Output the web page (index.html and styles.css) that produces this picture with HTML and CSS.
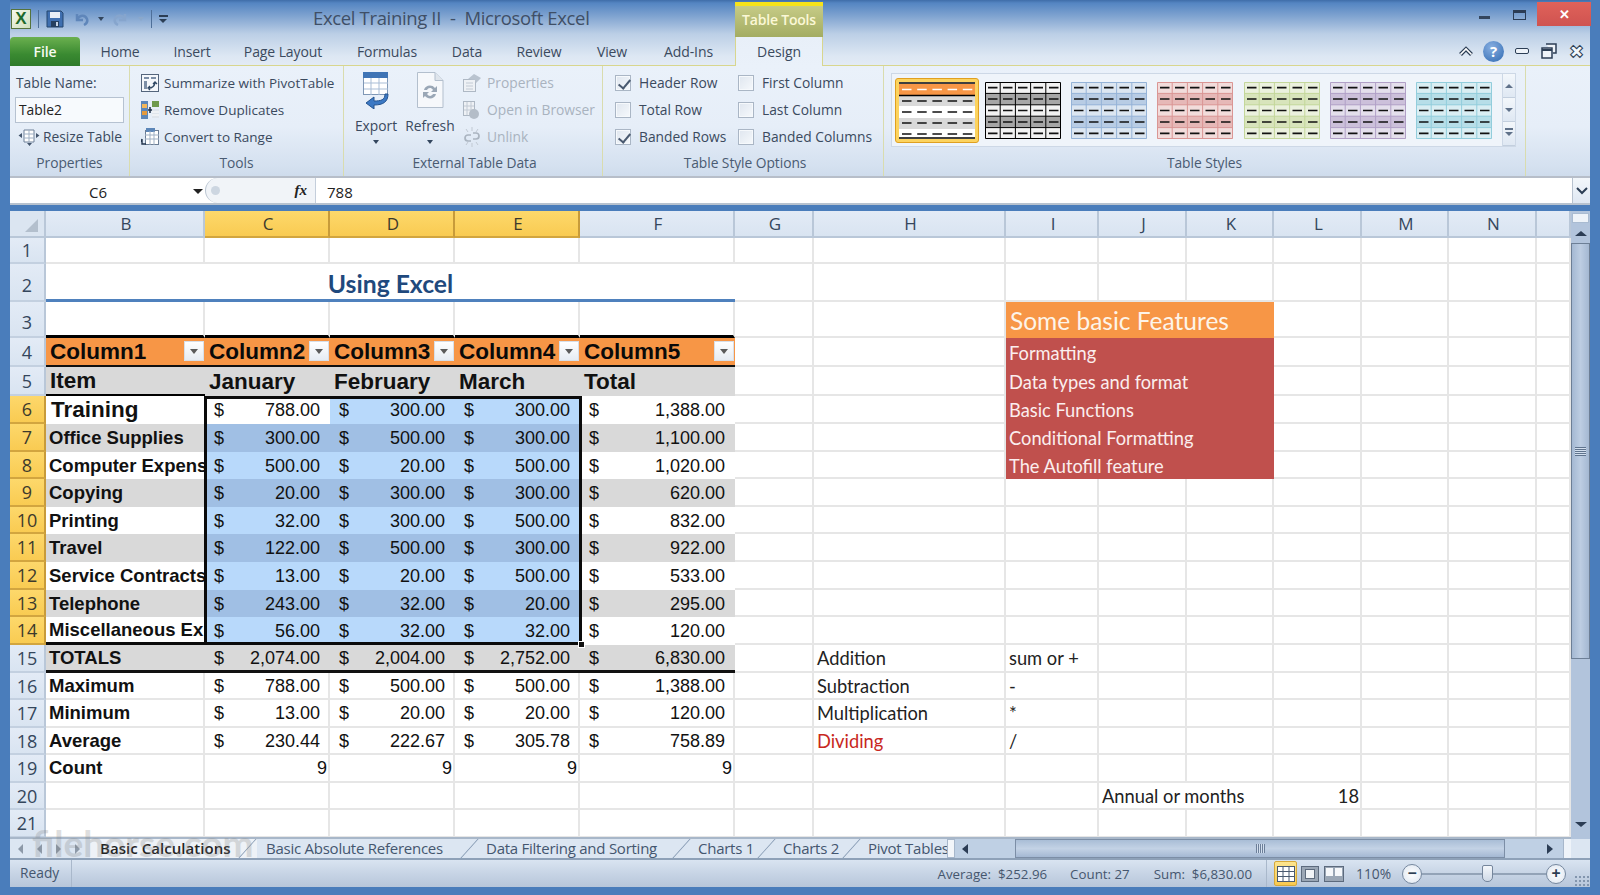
FILE: index.html
```html
<!DOCTYPE html>
<html lang="en">
<head>
    <meta charset="UTF-8">
    <title>Excel Training II - Microsoft Excel</title>
    <link rel="stylesheet" href="styles.css">
</head>
<body>
    <svg class="defs" width="0" height="0">
        <symbol id="grid" viewBox="0 0 76 57">
            <rect width="76" height="57" class="sw-light"/>
            <rect y="11.4" width="76" height="11.4" class="sw-dark"/>
            <rect y="34.2" width="76" height="11.4" class="sw-dark"/>
            <path class="sw-line" d="M.5.5H75.5V56.5H.5ZM15.2 0V57M30.4 0V57M45.6 0V57M60.8 0V57M0 11.4H76M0 22.8H76M0 34.2H76M0 45.6H76"/>
            <path class="sw-dash" d="M3 5.7h9.5M18 5.7h9.5M33 5.7h9.5M48.500 5.7h9.5M64 5.7h9.5M3 17h9.5M18 17h9.5M33 17h9.5M48.500 17h9.5M64 17h9.5M3 28.500h9.5M18 28.500h9.5M33 28.500h9.5M48.500 28.500h9.5M64 28.500h9.5M3 40h9.5M18 40h9.5M33 40h9.5M48.500 40h9.5M64 40h9.5M3 51.300h9.5M18 51.300h9.5M33 51.300h9.5M48.500 51.300h9.500M64 51.300h9.500"/>
        </symbol>
    </svg>

    <header class="chrome">
        <div class="titlebar">
            <div class="qat">
                <span class="xl-logo">X</span>
                <span class="qat-sep"></span>
                <svg class="qat-icon" width="18" height="18" viewBox="0 0 18 18"><path d="M1 1h14l2 2v14H1z" fill="#3f6fb0" stroke="#24466f"/><rect x="4" y="2" width="10" height="6" fill="#e8eef6"/><rect x="5" y="11" width="8" height="6" fill="#27405f"/><rect x="10" y="12" width="2" height="4" fill="#c7d5e6"/></svg>
                <svg class="qat-icon undo" width="16" height="16" viewBox="0 0 16 16"><path d="M4 3v6h6M4 9c2-5 8-6 10-1 1 3-1 5-3 6" fill="none" stroke="#5f86ba" stroke-width="2.500"/></svg>
                <span class="drop"></span>
                <svg class="qat-icon redo" width="16" height="16" viewBox="0 0 16 16"><path d="M12 3v6H6M12 9c-2-5-8-6-10-1-1 3 1 5 3 6" fill="none" stroke="#86a5cd" stroke-width="2.500"/></svg>
                <span class="drop faint"></span>
                <span class="qat-sep"></span>
                <span class="customize"></span>
            </div>
            <div class="doc-title">Excel Training II&nbsp; -&nbsp; Microsoft Excel</div>
            <div class="context-tab">Table Tools</div>
            <div class="winctl">
                <span class="w-min"></span>
                <span class="w-max"></span>
                <span class="w-close">✕</span>
            </div>
        </div>
        <nav class="tabs">
            <span class="tab file">File</span>
            <span class="tab t-home">Home</span>
            <span class="tab t-insert">Insert</span>
            <span class="tab t-layout">Page Layout</span>
            <span class="tab t-formulas">Formulas</span>
            <span class="tab t-data">Data</span>
            <span class="tab t-review">Review</span>
            <span class="tab t-view">View</span>
            <span class="tab t-addins">Add-Ins</span>
            <span class="tab design">Design</span>
            <div class="tab-tools">
                <svg width="16" height="12" viewBox="0 0 16 12"><path d="M2.500 9.500L8 4l5.500 5.500" fill="none" stroke="#2c3e55" stroke-width="4"/><path d="M2.500 9.500L8 4l5.500 5.500" fill="none" stroke="#fff" stroke-width="1.600"/></svg>
                <span class="help">?</span>
                <span class="mini-min"></span>
                <svg width="18" height="18" viewBox="0 0 18 18"><path d="M6 2h10v9h-3M2 6h10v10H2z" fill="#eef3f9" stroke="#2c3e55" stroke-width="1.500"/><path d="M2 8h10" stroke="#2c3e55" stroke-width="2"/></svg>
                <span class="mini-x">✖</span>
            </div>
        </nav>
    </header>

    <section class="ribbon">
        <div class="group g-props">
            <div class="group-body">
                <div class="rrow">Table Name:</div>
                <div class="rrow"><div class="name-input">Table2</div></div>
                <div class="rrow">
                    <svg width="24" height="20" viewBox="0 0 24 20"><path d="M7 3h10v12H7z" fill="#fff" stroke="#6f8098"/><path d="M7 7h10M7 11h10M12 3v12" stroke="#9fb0c4"/><path d="M5 6v5L1.500 8.500zM19 6v5l3.500-2.500zM10 16h5l-2.500 3z" fill="#44566e"/></svg>
                    Resize Table
                </div>
            </div>
            <div class="group-label">Properties</div>
        </div>
        <div class="group g-tools">
            <div class="group-body">
                <div class="rrow">
                    <svg width="18" height="18" viewBox="0 0 18 18"><rect x=".5" y=".5" width="17" height="17" fill="#f4f7fb" stroke="#54657c"/><path d="M3 3h5v2H3zM10 3h5v2h-5zM3 7h3v8H3z" fill="#7c8ea6"/><path d="M8 14c3 0 5-1 6-5m-2 1l2-2 2 2M9 12l-2 2 2 2" fill="none" stroke="#2f4763" stroke-width="1.300"/></svg>
                    Summarize with PivotTable
                </div>
                <div class="rrow">
                    <svg width="18" height="20" viewBox="0 0 18 20"><rect x="0" y="1" width="7" height="18" fill="#5c86b8"/><rect x="1" y="4" width="5" height="4" fill="#f3b75a"/><rect x="1" y="11" width="5" height="4" fill="#e59a3d"/><rect x="11" y="1" width="7" height="6" fill="#6f9a4d"/><rect x="11" y="9" width="7" height="9" fill="#dfe5ec"/><path d="M11 12h7M11 15h7" stroke="#fff"/><path d="M7 10h4M9 7v6" stroke="#1f2f44" stroke-width="1.500"/></svg>
                    Remove Duplicates
                </div>
                <div class="rrow">
                    <svg width="18" height="20" viewBox="0 0 18 20"><rect x="4.500" y="3.500" width="13" height="14" fill="#fff" stroke="#6b7d94"/><rect x="5" y="1" width="9" height="4" fill="#5c86b8"/><path d="M4 8h14M4 12h14M9 4v14M13 4v14" stroke="#9fb0c4"/><path d="M1 12v5h4M0 15l1-3" fill="none" stroke="#22344c" stroke-width="1.400"/></svg>
                    Convert to Range
                </div>
            </div>
            <div class="group-label">Tools</div>
        </div>
        <div class="group g-external">
            <div class="group-body">
                <div class="big-btn">
                    <svg width="30" height="38" viewBox="0 0 30 38"><rect x="2.500" y="1.500" width="24" height="22" fill="#fff" stroke="#7f97b5"/><rect x="2" y="1" width="25" height="6" fill="#3f74b5"/><path d="M3 12h24M3 18h24M10 7v17M18 7v17" stroke="#a9bdd6"/><path d="M24 23c0 6-4 7-11 7v-4l-8 6 8 6v-4c9 0 14-3 14-11z" fill="#3c79c4" stroke="#24548f"/></svg>
                    <span>Export</span>
                    <span class="drop"></span>
                </div>
                <div class="big-btn">
                    <svg width="30" height="38" viewBox="0 0 30 38"><path d="M2.500 1.500H20l8 8v27H2.500z" fill="#f6f8fb" stroke="#b3bfcd"/><path d="M20 1.500v8h8" fill="#dfe5ec" stroke="#b3bfcd"/><path d="M9 19c1-5 8-6 11-2l2-2v6h-6l2-2c-2-3-5-2-6 0zM21 23c-1 5-8 6-11 2l-2 2v-6h6l-2 2c2 3 5 2 6 0z" fill="#9aa7b6"/></svg>
                    <span>Refresh</span>
                    <span class="drop"></span>
                </div>
                <div class="small-list disabled">
                    <div class="rrow">
                        <svg width="20" height="20" viewBox="0 0 20 20"><rect x="1.500" y="6.500" width="12" height="12" fill="#eef1f5" stroke="#aeb8c4"/><path d="M4 10h7M4 13h7M4 16h7" stroke="#c2cad4"/><path d="M6 6l6-5 7 4-5 5-1-3z" fill="#b9c3cf"/></svg>
                        Properties
                    </div>
                    <div class="rrow">
                        <svg width="20" height="20" viewBox="0 0 20 20"><rect x="1.500" y="1.500" width="11" height="14" fill="#eef1f5" stroke="#aeb8c4"/><path d="M5 2v13M9 2v13M2 6h10M2 10h10" stroke="#c2cad4"/><circle cx="12" cy="14" r="5" fill="#b4bdc8"/></svg>
                        Open in Browser
                    </div>
                    <div class="rrow">
                        <svg width="20" height="20" viewBox="0 0 20 20"><path d="M3 11a3 3 0 0 1 3-3h3M17 9a3 3 0 0 1-3 3h-3M3 11a3 3 0 0 0 3 3h3M17 9a3 3 0 0 0-3-3h-3" fill="none" stroke="#aab4c0" stroke-width="1.700"/><path d="M10 0v4M10 16v4M4 2l2 3M16 2l-2 3M4 18l2-3M16 18l-2-3" stroke="#c1c9d3"/></svg>
                        Unlink
                    </div>
                </div>
            </div>
            <div class="group-label">External Table Data</div>
        </div>
        <div class="group g-options">
            <div class="group-body options-grid">
                <label class="opt"><span class="box on"></span>Header Row</label>
                <label class="opt"><span class="box"></span>First Column</label>
                <label class="opt"><span class="box"></span>Total Row</label>
                <label class="opt"><span class="box"></span>Last Column</label>
                <label class="opt"><span class="box on"></span>Banded Rows</label>
                <label class="opt"><span class="box"></span>Banded Columns</label>
            </div>
            <div class="group-label">Table Style Options</div>
        </div>
        <div class="group g-styles">
            <div class="group-body">
                <div class="gallery">
                    <div class="sw-selected">
                        <svg width="76" height="57" viewBox="0 0 76 57">
                            <rect width="76" height="57" fill="#fff"/>
                            <rect y="2" width="76" height="11" fill="#f79646"/>
                            <rect y="14" width="76" height="10" fill="#d9d9d9"/>
                            <rect y="36" width="76" height="11" fill="#d9d9d9"/>
                            <path d="M0 1h76M0 13.500h76M0 56h76" stroke="#000" stroke-width="1.500"/>
                            <path d="M3 7.500h72" stroke="#fff" stroke-width="1.500" stroke-dasharray="9.500 5.700"/>
                            <path d="M3 19h72M3 30h72M3 41h72M3 52h72" stroke="#111" stroke-width="1.700" stroke-dasharray="9.500 5.700"/>
                        </svg>
                    </div>
                    <svg class="swatch black"><use href="#grid"/></svg>
                    <svg class="swatch blue"><use href="#grid"/></svg>
                    <svg class="swatch red"><use href="#grid"/></svg>
                    <svg class="swatch green"><use href="#grid"/></svg>
                    <svg class="swatch purple"><use href="#grid"/></svg>
                    <svg class="swatch aqua"><use href="#grid"/></svg>
                    <div class="gallery-scroll">
                        <span><i class="tri-up"></i></span>
                        <span><i class="tri-down"></i></span>
                        <span class="more"><i class="tri-down"></i></span>
                    </div>
                </div>
            </div>
            <div class="group-label">Table Styles</div>
        </div>
    </section>

    <section class="formula">
        <div class="namebox">C6<span class="drop dark"></span></div>
        <div class="fx-area"><span class="knob"></span><em class="fx">fx</em></div>
        <div class="fvalue">788</div>
        <div class="fexpand"><svg width="12" height="8" viewBox="0 0 12 8"><path d="M1 1l5 5 5-5" fill="none" stroke="#2c3e55" stroke-width="2"/></svg></div>
    </section>

    <section class="sheet-area">
        <div class="sheet">
            <table class="cells">
                <colgroup>
                    <col class="c-head"><col class="c-b"><col class="c-m"><col class="c-m"><col class="c-m"><col class="c-f"><col class="c-g"><col class="c-h"><col class="c-i"><col class="c-w1"><col class="c-w2"><col class="c-w1"><col class="c-w2"><col class="c-w1"><col class="c-o">
                </colgroup>
                <thead>
                    <tr class="h27">
                        <th class="corner"><i></i></th>
                        <th>B</th><th class="sel">C</th><th class="sel">D</th><th class="sel">E</th><th>F</th><th>G</th><th>H</th><th>I</th><th>J</th><th>K</th><th>L</th><th>M</th><th>N</th><th></th>
                    </tr>
                </thead>
                <tbody>
                    <tr class="h26"><th>1</th><td></td><td></td><td></td><td></td><td></td><td></td><td></td><td></td><td></td><td></td><td></td><td></td><td></td><td></td></tr>
                    <tr class="h38"><th>2</th><td colspan="5" class="title">Using Excel</td><td></td><td></td><td></td><td></td><td></td><td></td><td></td><td></td><td></td></tr>
                    <tr class="h36"><th>3</th><td class="nb"></td><td class="nb"></td><td class="nb"></td><td class="nb"></td><td class="nb"></td><td></td><td></td><td colspan="3" class="feat-head">Some basic Features</td><td></td><td></td><td></td><td></td></tr>
                    <tr class="h29 hdr"><th>4</th>
                        <td class="tb-head">Column1<span class="filter"></span></td>
                        <td class="tb-head">Column2<span class="filter"></span></td>
                        <td class="tb-head">Column3<span class="filter"></span></td>
                        <td class="tb-head">Column4<span class="filter"></span></td>
                        <td class="tb-head">Column5<span class="filter"></span></td>
                        <td></td><td></td><td colspan="3" class="feat">Formatting</td><td></td><td></td><td></td><td></td></tr>
                    <tr class="h29"><th>5</th>
                        <td class="sub under">Item</td><td class="sub">January</td><td class="sub">February</td><td class="sub">March</td><td class="sub">Total</td>
                        <td></td><td></td><td colspan="3" class="feat">Data types and format</td><td></td><td></td><td></td><td></td></tr>
                    <tr class="h28"><th class="sel">6</th>
                        <td class="label big">Training</td>
                        <td class="acct"><span class="cur">$</span>788.00</td><td class="acct lt"><span class="cur">$</span>300.00</td><td class="acct lt"><span class="cur">$</span>300.00</td><td class="acct"><span class="cur">$</span>1,388.00</td>
                        <td></td><td></td><td colspan="3" class="feat">Basic Functions</td><td></td><td></td><td></td><td></td></tr>
                    <tr class="h28"><th class="sel">7</th>
                        <td class="label gr">Office Supplies</td>
                        <td class="acct dk"><span class="cur">$</span>300.00</td><td class="acct dk"><span class="cur">$</span>500.00</td><td class="acct dk"><span class="cur">$</span>300.00</td><td class="acct gr"><span class="cur">$</span>1,100.00</td>
                        <td></td><td></td><td colspan="3" class="feat">Conditional Formatting</td><td></td><td></td><td></td><td></td></tr>
                    <tr class="h27"><th class="sel">8</th>
                        <td class="label">Computer Expenses</td>
                        <td class="acct lt"><span class="cur">$</span>500.00</td><td class="acct lt"><span class="cur">$</span>20.00</td><td class="acct lt"><span class="cur">$</span>500.00</td><td class="acct"><span class="cur">$</span>1,020.00</td>
                        <td></td><td></td><td colspan="3" class="feat">The Autofill feature</td><td></td><td></td><td></td><td></td></tr>
                    <tr class="h28"><th class="sel">9</th>
                        <td class="label gr">Copying</td>
                        <td class="acct dk"><span class="cur">$</span>20.00</td><td class="acct dk"><span class="cur">$</span>300.00</td><td class="acct dk"><span class="cur">$</span>300.00</td><td class="acct gr"><span class="cur">$</span>620.00</td>
                        <td></td><td></td><td></td><td></td><td></td><td></td><td></td><td></td><td></td></tr>
                    <tr class="h27"><th class="sel">10</th>
                        <td class="label">Printing</td>
                        <td class="acct lt"><span class="cur">$</span>32.00</td><td class="acct lt"><span class="cur">$</span>300.00</td><td class="acct lt"><span class="cur">$</span>500.00</td><td class="acct"><span class="cur">$</span>832.00</td>
                        <td></td><td></td><td></td><td></td><td></td><td></td><td></td><td></td><td></td></tr>
                    <tr class="h28"><th class="sel">11</th>
                        <td class="label gr">Travel</td>
                        <td class="acct dk"><span class="cur">$</span>122.00</td><td class="acct dk"><span class="cur">$</span>500.00</td><td class="acct dk"><span class="cur">$</span>300.00</td><td class="acct gr"><span class="cur">$</span>922.00</td>
                        <td></td><td></td><td></td><td></td><td></td><td></td><td></td><td></td><td></td></tr>
                    <tr class="h28"><th class="sel">12</th>
                        <td class="label">Service Contracts</td>
                        <td class="acct lt"><span class="cur">$</span>13.00</td><td class="acct lt"><span class="cur">$</span>20.00</td><td class="acct lt"><span class="cur">$</span>500.00</td><td class="acct"><span class="cur">$</span>533.00</td>
                        <td></td><td></td><td></td><td></td><td></td><td></td><td></td><td></td><td></td></tr>
                    <tr class="h27"><th class="sel">13</th>
                        <td class="label gr">Telephone</td>
                        <td class="acct dk"><span class="cur">$</span>243.00</td><td class="acct dk"><span class="cur">$</span>32.00</td><td class="acct dk"><span class="cur">$</span>20.00</td><td class="acct gr"><span class="cur">$</span>295.00</td>
                        <td></td><td></td><td></td><td></td><td></td><td></td><td></td><td></td><td></td></tr>
                    <tr class="h28"><th class="sel">14</th>
                        <td class="label under-strong">Miscellaneous Expenses</td>
                        <td class="acct lt"><span class="cur">$</span>56.00</td><td class="acct lt"><span class="cur">$</span>32.00</td><td class="acct lt"><span class="cur">$</span>32.00</td><td class="acct"><span class="cur">$</span>120.00</td>
                        <td></td><td></td><td></td><td></td><td></td><td></td><td></td><td></td><td></td></tr>
                    <tr class="h28 totals"><th>15</th>
                        <td class="label gr">TOTALS</td>
                        <td class="acct gr"><span class="cur">$</span>2,074.00</td><td class="acct gr"><span class="cur">$</span>2,004.00</td><td class="acct gr"><span class="cur">$</span>2,752.00</td><td class="acct gr"><span class="cur">$</span>6,830.00</td>
                        <td></td><td class="note">Addition</td><td class="note">sum or +</td><td></td><td></td><td></td><td></td><td></td><td></td></tr>
                    <tr class="h27"><th>16</th>
                        <td class="label">Maximum</td>
                        <td class="acct"><span class="cur">$</span>788.00</td><td class="acct"><span class="cur">$</span>500.00</td><td class="acct"><span class="cur">$</span>500.00</td><td class="acct"><span class="cur">$</span>1,388.00</td>
                        <td></td><td class="note">Subtraction</td><td class="note">-</td><td></td><td></td><td></td><td></td><td></td><td></td></tr>
                    <tr class="h28"><th>17</th>
                        <td class="label">Minimum</td>
                        <td class="acct"><span class="cur">$</span>13.00</td><td class="acct"><span class="cur">$</span>20.00</td><td class="acct"><span class="cur">$</span>20.00</td><td class="acct"><span class="cur">$</span>120.00</td>
                        <td></td><td class="note">Multiplication</td><td class="note">*</td><td></td><td></td><td></td><td></td><td></td><td></td></tr>
                    <tr class="h27"><th>18</th>
                        <td class="label">Average</td>
                        <td class="acct"><span class="cur">$</span>230.44</td><td class="acct"><span class="cur">$</span>222.67</td><td class="acct"><span class="cur">$</span>305.78</td><td class="acct"><span class="cur">$</span>758.89</td>
                        <td></td><td class="note red-text">Dividing</td><td class="note">/</td><td></td><td></td><td></td><td></td><td></td><td></td></tr>
                    <tr class="h28"><th>19</th>
                        <td class="label">Count</td>
                        <td class="count">9</td><td class="count">9</td><td class="count">9</td><td class="count">9</td>
                        <td></td><td></td><td></td><td></td><td></td><td></td><td></td><td></td><td></td></tr>
                    <tr class="h27"><th>20</th><td></td><td></td><td></td><td></td><td></td><td></td><td></td><td></td><td colspan="2" class="note">Annual or months</td><td class="note right">18</td><td></td><td></td><td></td></tr>
                    <tr class="h28"><th>21</th><td></td><td></td><td></td><td></td><td></td><td></td><td></td><td></td><td></td><td></td><td></td><td></td><td></td><td></td></tr>
                </tbody>
            </table>
            <div class="selection"><span class="fill-handle"></span></div>
        </div>
        <aside class="vscroll">
            <span class="vsplit"></span>
            <span class="vup"><i class="tri-up dark"></i></span>
            <div class="vthumb"><span class="grip"></span></div>
            <span class="vdown"><i class="tri-down dark"></i></span>
        </aside>
    </section>

    <section class="tabbar">
        <div class="sheet-nav">
            <i class="nav-first"></i><i class="nav-prev"></i><i class="nav-next"></i><i class="nav-last"></i>
        </div>
        <div class="sheet-tabs">
            <span class="stab active">Basic Calculations</span>
            <span class="stab s-abs">Basic Absolute References</span>
            <span class="stab s-filter">Data Filtering and Sorting</span>
            <span class="stab s-c1">Charts 1</span>
            <span class="stab s-c2">Charts 2</span>
            <span class="stab s-pivot">Pivot Tables</span>
        </div>
        <span class="tab-split"></span>
        <div class="hscroll">
            <i class="tri-left"></i>
            <div class="hthumb"><span class="hgrip"></span></div>
            <i class="tri-right"></i>
        </div>
        <span class="hsplit"></span>
    </section>

    <footer class="status">
        <span class="ready">Ready</span>
        <div class="stats">
            <span class="s-avg">Average:&nbsp; $252.96</span>
            <span class="s-count">Count: 27</span>
            <span class="s-sum">Sum:&nbsp; $6,830.00</span>
        </div>
        <div class="views">
            <span class="view on"><svg width="18" height="16" viewBox="0 0 18 16"><rect x=".5" y=".5" width="17" height="15" fill="#fff" stroke="#4a5a70"/><path d="M0 5.500h18M0 10.500h18M6 0v16M12 0v16" stroke="#4a5a70"/></svg></span>
            <span class="view"><svg width="18" height="16" viewBox="0 0 18 16"><rect x=".5" y=".5" width="17" height="15" fill="#9aa6b5" stroke="#5c6a7d"/><rect x="4.500" y="3.500" width="9" height="9" fill="#f0f3f7" stroke="#5c6a7d"/></svg></span>
            <span class="view"><svg width="20" height="16" viewBox="0 0 20 16"><rect x=".5" y=".5" width="19" height="15" fill="#9aa6b5" stroke="#5c6a7d"/><rect x="2" y="2" width="7" height="8" fill="#f5f7fa"/><rect x="11" y="2" width="7" height="8" fill="#f5f7fa"/></svg></span>
        </div>
        <span class="zoom-pct">110%</span>
        <span class="zoom-btn">−</span>
        <div class="slider"><span class="slider-thumb"></span></div>
        <span class="zoom-btn">+</span>
        <span class="resize-grip"></span>
    </footer>

    <div class="watermark">filehorse.com</div>
</body>
</html>
```

FILE: styles.css
```css
* {
    box-sizing: border-box;
}

html, body {
    height: 100%;
}

body {
    margin: 0;
    height: 895px;
    overflow: hidden;
    padding-bottom: 8px;
    display: flex;
    flex-direction: column;
    background: #4a7dbb;
    color: #3b4a5e;
    font-family: "Open Sans", "Noto Sans", sans-serif;
    font-size: 13.8px;
    position: relative;
}

.defs {
    position: absolute;
}

/* title bar and tabs */
.chrome {
    height: 66px;
    flex: none;
    margin: 0 10px;
    background: linear-gradient(#3f6da8 0, #5485c2 3px, #7fa3d0 16px, #bccfe6 34px, #dde7f3 56px, #e3ebf5 66px);
}

.titlebar {
    height: 37px;
    display: flex;
}

.qat {
    width: 303px;
    display: flex;
    align-items: center;
    padding: 0 0 0 1px;
    gap: 6px;
    height: 37px;
}

.xl-logo {
    width: 20px;
    height: 20px;
    background: linear-gradient(135deg, #f6f8ee, #cfe0bd);
    border: 1px solid #55733c;
    color: #1d6a2b;
    font: bold 17px/18px "Liberation Sans", sans-serif;
    text-align: center;
}

.qat-sep {
    width: 1px;
    height: 18px;
    background: #e9eff7;
    border-right: 1px solid #4e6f99;
    margin: 0 1px;
}

.qat .qat-icon {
    flex: none;
}

.qat .undo, .qat .redo, .qat .drop {
    margin-left: 3px;
}

.drop {
    display: inline-block;
    width: 0;
    height: 0;
    border: 3.5px solid transparent;
    border-top: 4px solid #33465e;
    border-bottom: 0;
}

.drop.faint {
    border-top-color: #8ba8cb;
}

.customize {
    width: 9px;
    height: 8px;
    border-top: 2px solid #2c3e55;
    position: relative;
}

.customize::after {
    content: "";
    display: block;
    margin-top: 2px;
    border: 4px solid transparent;
    border-top: 4px solid #2c3e55;
    border-bottom: 0;
    width: 0;
}

.doc-title {
    width: 422px;
    font-size: 18.5px;
    line-height: 36px;
    color: #3f4f66;
    letter-spacing: -.35px;
}

.context-tab {
    width: 88px;
    margin-top: 2px;
    border-top: 4px solid #f6e21a;
    background: linear-gradient(#c6cb86, #a3ac62);
    color: #fbf8d6;
    font-weight: 600;
    font-size: 14px;
    text-align: center;
    line-height: 27px;
    letter-spacing: -.2px;
}

.winctl {
    margin-left: auto;
    display: flex;
    height: 26px;
    margin-top: 2px;
    margin-right: -1px;
}

.w-min {
    width: 11px;
    height: 3px;
    background: #34465e;
    margin: 14px 23px 0 0;
}

.w-max {
    width: 13px;
    height: 10px;
    border: 1.5px solid #2b3c54;
    border-top-width: 3px;
    margin: 8px 11px 0 0;
}

.w-close {
    width: 54px;
    height: 24px;
    background: linear-gradient(#e0625a, #cf5350);
    color: #fff;
    font-size: 13px;
    font-weight: 700;
    line-height: 24px;
    text-align: center;
}

.tabs {
    height: 29px;
    display: flex;
    align-items: stretch;
    border-bottom: 1px solid #d8d68e;
}

.tab {
    text-align: center;
    line-height: 29px;
    color: #3b4a5e;
    font-size: 14px;
    letter-spacing: -.1px;
}

.tab.file {
    width: 70px;
    margin-bottom: -1px;
    background: linear-gradient(#6bb04f, #3a8a31 60%, #2e7a2b);
    border-radius: 4px 4px 0 0;
    color: #f7fbf1;
    font-weight: 600;
}

.t-home { width: 80px; }
.t-insert { width: 64px; }
.t-layout { width: 118px; }
.t-formulas { width: 90px; }
.t-data { width: 70px; }
.t-review { width: 74px; }
.t-view { width: 72px; }
.t-addins { width: 87px; padding-right: 6px; }

.tab.design {
    width: 88px;
    height: 29px;
    background: linear-gradient(#e8eff8, #eaf1fa);
    border: 1px solid #d8d68e;
    border-width: 0 1px;
}

.tab-tools {
    margin-left: auto;
    display: flex;
    align-items: center;
    gap: 0;
    padding-right: 3px;
    height: 28px;
}

.tab-tools svg:first-child {
    margin-right: 9px;
}

.help {
    width: 21px;
    height: 21px;
    border-radius: 50%;
    background: radial-gradient(circle at 40% 30%, #87aee0, #2f6ab2);
    color: #fff;
    font-weight: 700;
    font-size: 15px;
    line-height: 21px;
    text-align: center;
    margin-right: 11px;
}

.mini-min {
    width: 14px;
    height: 6px;
    background: #eef3f9;
    border: 1.5px solid #2c3e55;
    border-radius: 2px;
    margin-right: 11px;
}

.mini-x {
    width: 22px;
    margin-left: 7px;
    font-size: 18px;
    line-height: 22px;
    color: #f2f6fb;
    -webkit-text-stroke: 1px #2c3e55;
    text-align: center;
}

/* ribbon */
.ribbon {
    height: 112px;
    flex: none;
    margin: 0 10px;
    display: flex;
    background: linear-gradient(#eaf1fa 0, #e6eef8 55%, #d5e1f0 90%, #cfdcec 100%);
    border-bottom: 2px solid #b7bec9;
}

.group {
    display: flex;
    flex-direction: column;
    border-right: 1px solid #d9dcae;
    height: 110px;
}

.group-body {
    height: 85px;
    padding-top: 3px;
}

.group-label {
    height: 25px;
    line-height: 24px;
    text-align: center;
    color: #4a5b72;
    font-size: 13.8px;
    letter-spacing: -.05px;
}

.g-props { width: 120px; }
.g-props .group-body { padding-left: 6px; padding-right: 5px; }
.g-tools { width: 214px; }
.g-tools .group-body { padding-left: 11px; font-size: 13.5px; }
.g-external { width: 259px; }
.g-external .group-body { padding-left: 5px; }
.g-external .group-label { padding-left: 3px; }
.g-options { width: 281px; }
.g-options .group-body { padding-left: 12px; }
.g-options .group-label { padding-left: 4px; }
.g-styles { width: 642px; }
.g-styles .group-body { padding-left: 7px; }

.rrow {
    height: 27px;
    display: flex;
    align-items: center;
    gap: 5px;
    white-space: nowrap;
}

.g-props .rrow svg {
    margin-right: -3px;
    margin-left: 1px;
}

.name-input {
    width: 110px;
    height: 26px;
    margin-left: -1px;
    padding-left: 3px;
    border: 1px solid #b6c2d1;
    background: #f7fafd;
    color: #222;
    line-height: 24px;
}

.g-external .group-body {
    display: flex;
}

.big-btn {
    width: 54px;
    display: flex;
    flex-direction: column;
    align-items: center;
    color: #3b4a5e;
    padding-top: 2px;
}

.big-btn span:nth-child(2) {
    margin-top: 8px;
    line-height: 18px;
}

.big-btn .drop {
    margin-top: 5px;
}

.small-list {
    margin-left: 5px;
}

.disabled {
    color: #a9b3bf;
}

.options-grid {
    display: grid;
    grid-template-columns: 123px 1fr;
    grid-auto-rows: 27px;
}

.opt {
    display: flex;
    align-items: center;
    gap: 8px;
    white-space: nowrap;
}

.box {
    width: 16px;
    height: 16px;
    border: 1px solid #aab6c5;
    background: linear-gradient(135deg, #dfe6ef, #f6f9fc);
    box-shadow: inset 0 0 0 1px #f6f9fc;
    position: relative;
}

.box.on::after {
    content: "";
    position: absolute;
    left: 5px;
    top: 1px;
    width: 5px;
    height: 10px;
    border: solid #4a5a70;
    border-width: 0 2px 2px 0;
    transform: rotate(40deg);
}

.gallery {
    width: 625px;
    height: 74px;
    margin-top: 4px;
    display: flex;
    align-items: center;
    padding-left: 3px;
    border: 1px solid #cdd8e6;
    background: #eff4fa;
}

.sw-selected {
    width: 84px;
    height: 65px;
    margin-right: 6px;
    padding: 3px;
    flex: none;
    border: 1px solid #e0a020;
    border-radius: 3px;
    background: #fcd35f;
}

.sw-selected svg {
    display: block;
}

.swatch {
    width: 76px;
    height: 57px;
    margin-right: 10.2px;
    flex: none;
}

.swatch use {
    width: 76px;
    height: 57px;
}

.sw-light { fill: var(--light); }
.sw-dark { fill: var(--dark); }
.sw-line { fill: none; stroke: var(--line); }
.sw-dash { fill: none; stroke: #111; stroke-width: 1.7; }

.black { --light: #f2f2f2; --dark: #a6a6a6; --line: #000; }
.blue { --light: #dce6f1; --dark: #b8cce4; --line: #95b3d7; }
.red { --light: #f2dcdb; --dark: #e6b8b7; --line: #da9694; }
.green { --light: #ebf1de; --dark: #d8e4bc; --line: #c4d79b; }
.purple { --light: #e4dfec; --dark: #ccc0da; --line: #b1a0c7; }
.aqua { --light: #daeef3; --dark: #b7dee8; --line: #92cddc; }

.gallery-scroll {
    margin-left: auto;
    width: 18px;
    height: 72px;
    display: flex;
    flex-direction: column;
    border-left: 1px solid #cdd8e6;
}

.gallery-scroll span {
    flex: 1;
    display: flex;
    align-items: center;
    justify-content: center;
    background: linear-gradient(#f3f7fb, #dfe8f3);
    border-bottom: 1px solid #c3cfde;
}

.tri-up, .tri-down {
    display: block;
    width: 0;
    height: 0;
    border: 4px solid transparent;
}

.tri-up {
    border-bottom: 4px solid #5f7189;
    border-top: 0;
}

.tri-down {
    border-top: 4px solid #5f7189;
    border-bottom: 0;
}

.more .tri-down {
    position: relative;
}

.more .tri-down::before {
    content: "";
    position: absolute;
    left: -4px;
    top: -8px;
    width: 8px;
    height: 2px;
    background: #5f7189;
}

/* formula bar */
.formula {
    height: 27px;
    flex: none;
    margin: 0 10px;
    display: flex;
    background: #fff;
    border-bottom: 2px solid #b7c2cf;
    color: #222;
}

.namebox {
    width: 195px;
    display: flex;
    align-items: center;
    justify-content: center;
    font-size: 15px;
    position: relative;
    padding: 2px 19px 0 0;
}

.drop.dark {
    border-width: 5px 5px 0;
    border-top-color: #222;
    position: absolute;
    right: 2px;
    top: 11px;
}

.fx-area {
    width: 111px;
    display: flex;
    align-items: center;
    justify-content: space-between;
    padding-right: 8px;
    background: #f1f4f8;
    border-left: 1px solid #b9c4d1;
    border-radius: 14px 0 0 14px;
    border-right: 1px solid #c4cedb;
}

.knob {
    width: 9px;
    height: 9px;
    margin-left: 5px;
    border-radius: 50%;
    background: #cdd6e1;
}

.fx {
    font: italic bold 15px "Liberation Serif", serif;
}

.fvalue {
    flex: 1;
    padding: 2px 0 0 11px;
    font-size: 15px;
    line-height: 24px;
}

.fexpand {
    width: 18px;
    background: linear-gradient(#f3f7fb, #dfe8f3);
    border-left: 1px solid #b7c2cf;
    display: flex;
    align-items: center;
    justify-content: center;
}

/* sheet */
.sheet-area {
    margin: 6px 0 0 10px;
    height: 628px;
    flex: none;
    display: flex;
}

.sheet {
    position: relative;
    width: 1561px;
    height: 628px;
    overflow: hidden;
    background: #fff;
    border-bottom: 2px solid #a8b7c9;
}

.cells {
    table-layout: fixed;
    width: 1561px;
    border-collapse: separate;
    border-spacing: 0;
    font-family: "Liberation Sans", Arial, sans-serif;
    font-size: 18px;
    color: #111;
}

.c-head { width: 36px; }
.c-b { width: 159px; }
.c-m { width: 125px; }
.c-f { width: 155px; }
.c-g { width: 79px; }
.c-h { width: 192px; }
.c-i { width: 93px; }
.c-w1 { width: 88px; }
.c-w2 { width: 87px; }
.c-o { width: 34px; }

.h26 { height: 26px; }
.h27 { height: 27px; }
.h28 { height: 28px; }
.h29 { height: 29px; }
.h36 { height: 36px; }
.h38 { height: 38px; }

th {
    padding: 0;
    font: 18px "Open Sans", sans-serif;
    color: #34465c;
    background: linear-gradient(#e3ebf6, #d9e4f1);
    border-right: 2px solid #b9c7d8;
    border-bottom: 2px solid #c3d0e0;
}

thead th {
    font-size: 17px;
    padding-left: 3px;
    border-bottom: 2px solid #b9c7d8;
}

.h38 th, .h36 th {
    padding-top: 6px;
}

th.sel {
    background: linear-gradient(#fdd86b, #f9cb52);
    border-right-color: #c89b3a;
    border-bottom-color: #d2a53f;
    color: #3d3a2c;
}

.corner {
    position: relative;
    background: #dbe5f1;
}

.corner i {
    position: absolute;
    right: 6px;
    bottom: 4px;
    width: 0;
    height: 0;
    border-left: 13px solid transparent;
    border-bottom: 13px solid #b3bfcd;
}

td {
    padding: 0 3px;
    border-right: 2px solid #e6e6e6;
    border-bottom: 2px solid #e6e6e6;
    white-space: nowrap;
    overflow: hidden;
    vertical-align: middle;
}

.title {
    text-align: center;
    font: bold 24.7px Lato, sans-serif;
    color: #1f497d;
    padding-top: 4px;
    border-right: 0;
    border-bottom: 3px solid #4f81bd;
}

.nb {
    border-bottom: 3px solid #000;
}

.feat-head {
    background: #f79646;
    color: #fdf4e9;
    font: 24.5px Lato, sans-serif;
    padding-left: 4px;
    border: 0;
}

.feat {
    background: #c0504d;
    color: #fbeeee;
    font: 18.3px Lato, sans-serif;
    border: 0;
}

.note {
    font: 18.3px Lato, sans-serif;
    color: #222;
}

.red-text {
    color: #c8281e;
}

.right {
    text-align: right;
    padding-right: 1px;
}

.tb-head {
    background: #f79646;
    font-size: 22.5px;
    font-weight: 700;
    color: #0a0a0a;
    border-right: 0;
    border-bottom: 2px solid #111;
    padding: 1px 1px 0 4px;
}

.filter {
    float: right;
    width: 20px;
    height: 20px;
    margin-top: 2px;
    background: linear-gradient(#fff, #e6ecf3);
    border: 1px solid #d7dfe9;
    position: relative;
}

.filter::after {
    content: "";
    position: absolute;
    left: 5px;
    top: 7px;
    border: 4px solid transparent;
    border-top: 5px solid #5b5b5b;
    border-bottom: 0;
}

.sub {
    background: #d9d9d9;
    font-size: 22.5px;
    font-weight: 700;
    border-right: 0;
    border-bottom: 0;
    padding-left: 4px;
}

.sub.under {
    border-bottom: 2px solid #000;
}

.label {
    font-size: 18.5px;
    font-weight: 700;
    border-bottom-color: #e6e6e6;
    padding-left: 3px;
}

.label.big {
    font-size: 22.5px;
    padding-left: 5px;
}

.acct {
    text-align: right;
    padding: 1px 10px 0 9px;
}

tr:nth-child(n+16) .acct {
    padding-right: 8px;
}

.cur {
    float: left;
}

.count {
    text-align: right;
    padding-right: 1px;
}

.lt, .dk, .gr {
    border-color: transparent;
}

tr:nth-child(n+6):nth-child(-n+14) td:nth-child(-n+6) {
    border-right: 0;
    border-bottom: 0;
}

.lt { background: #b8d9fb; }
.dk { background: #a0bfe4; }
.gr { background: #d9d9d9; }

tr:nth-child(n+6):nth-child(-n+14) td.under-strong {
    border-bottom: 3px solid #0b0b0b;
}

.totals td:nth-child(-n+6) {
    background: #d9d9d9;
    border-right: 0;
    border-bottom: 3px solid #111;
}

.totals td:nth-child(2) {
    font-size: 18.5px;
}

.selection {
    position: absolute;
    left: 194px;
    top: 185px;
    width: 378px;
    height: 249px;
    border: 3px solid #0b0b0b;
    pointer-events: none;
}

.fill-handle {
    position: absolute;
    right: -6px;
    bottom: -6px;
    width: 7px;
    height: 7px;
    background: #111;
    border: 1px solid #fff;
}

/* vertical scrollbar */
.vscroll {
    width: 19px;
    height: 628px;
    background: #b2c4dc;
    display: flex;
    flex-direction: column;
    align-items: stretch;
}

.vsplit {
    height: 10px;
    margin: 2px 1px 0;
    background: #eef3f9;
    border: 1px solid #a9bbd1;
}

.vup {
    height: 20px;
    display: flex;
    align-items: center;
    justify-content: center;
}

.vthumb {
    height: 416px;
    background: linear-gradient(90deg, #a4b8d2, #bdcde2 50%, #a4b8d2);
    border: 1px solid #6d7f96;
    display: flex;
    align-items: center;
    justify-content: center;
}

.grip {
    width: 11px;
    height: 9px;
    background: repeating-linear-gradient(#5f738d 0 1px, #d3dfee 1px 2px);
}

.vdown {
    margin-top: auto;
    height: 20px;
    display: flex;
    align-items: flex-start;
    padding-top: 3px;
    justify-content: center;
}

.tri-up.dark {
    border-width: 0 6px 5px;
    border-bottom-color: #2b3c54;
}

.tri-down.dark {
    border-width: 5px 6px 0;
    border-top-color: #2b3c54;
}

/* sheet tabs and horizontal scroll */
.tabbar {
    height: 21px;
    flex: none;
    margin: 0 10px;
    display: flex;
    background: #dce6f2;
    border-bottom: 2px solid #8ea1b8;
    overflow: hidden;
}

.sheet-nav {
    width: 80px;
    display: flex;
    align-items: center;
    gap: 14px;
    padding-left: 8px;
    flex: none;
}

.sheet-nav i {
    width: 0;
    height: 0;
    border: 5px solid transparent;
    border-left: 0;
    border-right: 5px solid #8d99a8;
}

.sheet-nav .nav-next, .sheet-nav .nav-last {
    border-left: 5px solid #8d99a8;
    border-right: 0;
}

.sheet-tabs {
    width: 857px;
    display: flex;
    overflow: hidden;
    flex: none;
    color: #44566f;
    font-size: 15px;
    letter-spacing: -.25px;
    white-space: nowrap;
    line-height: 19px;
}

.stab {
    flex: none;
    position: relative;
    overflow: visible;
}

.stab::after {
    content: "";
    position: absolute;
    right: 9px;
    top: 0;
    height: 19px;
    width: 14px;
    border-right: 1px solid #7e93ad;
    transform: skewX(-42deg);
}

.stab.active {
    width: 167px;
    padding-left: 10px;
    color: #222;
    font-weight: 600;
    letter-spacing: .05px;
    background: #eef2f7;
}

.s-abs { width: 222px; padding-left: 9px; }
.s-filter { width: 212px; padding-left: 7px; }
.s-c1 { width: 85px; padding-left: 7px; }
.s-c2 { width: 85px; padding-left: 7px; }
.s-pivot { width: 86px; padding-left: 7px; }
.s-pivot::after { display: none; }

.tab-split {
    width: 8px;
    background: #f3f6fa;
    border: 1px solid #a7b7cb;
    flex: none;
}

.hscroll {
    flex: 1;
    display: flex;
    align-items: center;
    background: #bfd0e4;
    padding: 0 10px 0 7px;
}

.tri-left, .tri-right {
    width: 0;
    height: 0;
    border: 5px solid transparent;
}

.tri-left {
    border-right: 6px solid #2b3c54;
    border-left: 0;
}

.tri-right {
    border-left: 6px solid #2b3c54;
    border-right: 0;
    margin-left: auto;
}

.hthumb {
    width: 490px;
    height: 19px;
    margin-left: 47px;
    background: linear-gradient(#a9bdd6, #c3d2e5 50%, #a4b8d3);
    border: 1px solid #7c8ea6;
    display: flex;
    align-items: center;
    justify-content: center;
}

.hgrip {
    width: 9px;
    height: 9px;
    background: repeating-linear-gradient(90deg, #6c7f99 0 1px, #d3dfee 1px 2px);
}

.hsplit {
    width: 8px;
    margin-right: 19px;
    background: #eef3f9;
    flex: none;
    border-left: 1px solid #a7b7cb;
}

/* status bar */
.status {
    height: 27px;
    flex: none;
    margin: 0 10px;
    display: flex;
    align-items: center;
    background: linear-gradient(#d9e4f1, #c7d4e5 50%, #b7c6da);
    color: #45566e;
    font-size: 13.3px;
}

.ready {
    width: 62px;
    padding-left: 10px;
    height: 27px;
    line-height: 25px;
    border-right: 1px solid #a9b8cb;
    font-size: 13.8px;
}

.stats {
    margin-left: auto;
    display: flex;
    white-space: nowrap;
}

.s-avg { margin-right: 23px; }
.s-count { margin-right: 24px; }

.views {
    display: flex;
    align-items: center;
    margin-left: 14px;
    padding-left: 7px;
    border-left: 1px solid #a9b8cb;
    height: 27px;
    gap: 1px;
}

.view {
    width: 23px;
    height: 25px;
    display: flex;
    align-items: center;
    justify-content: center;
}

.view.on {
    background: linear-gradient(#fde58f, #f9c94f);
    border: 1px solid #d7a93a;
    border-radius: 2px;
}

.zoom-pct {
    margin-left: 11px;
    width: 46px;
    font-size: 13.8px;
}

.zoom-btn {
    width: 20px;
    height: 20px;
    border-radius: 50%;
    border: 1px solid #76889f;
    background: radial-gradient(#fff, #dce5f0);
    color: #2c3e55;
    font-weight: 700;
    font-size: 16px;
    line-height: 17px;
    text-align: center;
}

.slider {
    width: 124px;
    height: 2px;
    background: #93a3b7;
    position: relative;
}

.slider-thumb {
    position: absolute;
    left: 60px;
    top: -8px;
    width: 11px;
    height: 17px;
    background: linear-gradient(#f4f7fb, #cfd9e6);
    border: 1px solid #75869c;
    border-radius: 2px 2px 5px 5px;
}

.resize-grip {
    width: 16px;
    height: 12px;
    margin-left: 8px;
    align-self: flex-end;
    background: radial-gradient(circle, #8295ad 1px, transparent 1.5px) 0 0 / 4px 4px;
}

.watermark {
    position: absolute;
    left: 32px;
    top: 820px;
    font: bold 37px Lato, sans-serif;
    color: #808080;
    opacity: .25;
    pointer-events: none;
    white-space: nowrap;
}
```
